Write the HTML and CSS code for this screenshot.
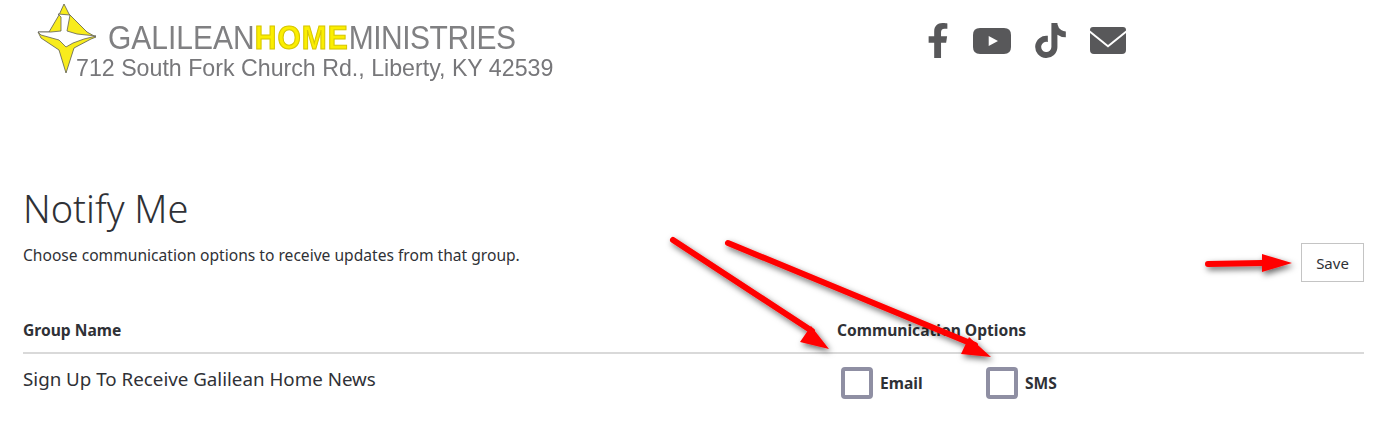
FILE: index.html
```html
<!DOCTYPE html>
<html lang="en">
<head>
<meta charset="utf-8">
<title>Notify Me</title>
<link rel="stylesheet" href="styles.css">
</head>
<body>
<header class="site-header">
  <a class="logo" href="#">
    <svg class="logo-mark" viewBox="0 0 60 72" aria-hidden="true">
      <path d="M27 1 L32 11 L50 29 L59 34 L54 36 L37 45 L29 70 L22 47 L4 35 L1 29 L12 29 L22 12 Z" fill="#f8ec1c" stroke="#5a5a50" stroke-width=".8" stroke-linejoin="round"/>
      <path d="M21 11 L33 12 L30 28 L40 31 L59 33 L47 36 L36 40 L29 44 L22 37 L4 32 L1 29 L14 29 L24 28 L24 14 Z" fill="#fff" stroke="#5f5f56" stroke-width=".8" stroke-linejoin="round"/>
    </svg>
    <div class="logo-name"><span>GALILEAN</span><b>HOME</b><span class="tight">MINISTRIES</span></div>
    <div class="logo-addr">712 South Fork Church Rd., Liberty, KY 42539</div>
  </a>
  <nav class="social">
    <a href="#" class="ico-f"><svg viewBox="0 0 320 512"><path d="M279.14 288l14.22-92.66h-88.91v-60.13c0-25.35 12.42-50.06 52.24-50.06h40.42V6.26S260.43 0 225.36 0c-73.22 0-121.08 44.38-121.08 124.72v70.62H22.89V288h81.39v224h100.17V288z"/></svg></a>
    <a href="#" class="ico-y"><svg viewBox="0 0 38 26"><path fill-rule="evenodd" d="M7 0H31Q38 0 38 7V19Q38 26 31 26H7Q0 26 0 19V7Q0 0 7 0ZM15.700 8V18L25 13Z"/></svg></a>
    <a href="#" class="ico-t"><svg viewBox="0 0 448 512"><path d="M448,209.91a210.06,210.06,0,0,1-122.77-39.25V349.38A162.55,162.55,0,1,1,185,188.31V278.2a74.62,74.62,0,1,0,52.23,71.18V0l88,0a121.18,121.18,0,0,0,1.86,22.17h0A122.18,122.18,0,0,0,381,102.39a121.43,121.43,0,0,0,67,20.14Z"/></svg></a>
    <a href="#" class="ico-m"><svg viewBox="0 0 36 27"><path d="M3 0H33Q36 0 36 3V3.500L18 18 0 3.500V3Q0 0 3 0Z"/><path d="M0 6L18 20.500 36 6V23Q36 27 32 27H4Q0 27 0 23Z"/></svg></a>
  </nav>
</header>
<main class="page">
  <h1 class="title">Notify Me</h1>
  <div class="intro">
    <p class="lead">Choose communication options to receive updates from that group.</p>
    <button class="save" type="button">Save</button>
  </div>
  <div class="table-head">
    <div>Group Name</div>
    <div>Communication Options</div>
  </div>
  <div class="table-row">
    <div class="group">Sign Up To Receive Galilean Home News</div>
    <div class="options">
      <label class="opt"><span class="box"></span>Email</label>
      <label class="opt"><span class="box"></span>SMS</label>
    </div>
  </div>
</main>
<svg class="arrows" viewBox="0 0 1400 431" aria-hidden="true">
  <defs>
    <filter id="sh" x="-20%" y="-20%" width="140%" height="140%"><feDropShadow dx="2" dy="3" stdDeviation="3" flood-color="#000" flood-opacity=".6"/></filter>
  </defs>
  <g filter="url(#sh)" fill="#f00" stroke="none">
    <path d="M673 240L812 331" stroke="#f00" stroke-width="6" stroke-linecap="round" fill="none"/>
    <path d="M829 349L800 342 811 326Z"/>
    <path d="M728 243L975 345" stroke="#f00" stroke-width="6" stroke-linecap="round" fill="none"/>
    <path d="M991 357L961 354 969 337Z"/>
    <path d="M1208 264L1262 263" stroke="#f00" stroke-width="6" stroke-linecap="round" fill="none"/>
    <path d="M1292 263L1262 254V272Z"/>
  </g>
</svg>
</body>
</html>
```
FILE: styles.css
```css
* { box-sizing: border-box; }
html, body { margin: 0; padding: 0; background: #fff; }
body { font-family: "Noto Sans", "Liberation Sans", sans-serif; color: #2f3136; width: 1400px; height: 431px; overflow: hidden; position: relative; }
.site-header { display: flex; height: 184px; align-items: flex-start; }
.logo { position: relative; display: block; width: 900px; padding: 21px 0 0 37px; color: #77777a; text-decoration: none; font-family: "Liberation Sans", sans-serif; filter: blur(.35px); }
.logo-mark { position: absolute; left: 37px; top: 3px; width: 60px; height: 72px; }
.logo-name { margin-left: 71px; font-size: 30px; line-height: 36px; height: 34px; white-space: nowrap; color: #808082; transform: scaleY(1.1); transform-origin: 0 28px; }
.logo-name b { color: #fbee00; -webkit-text-stroke: 1px #d6c600; letter-spacing: 1px; }
.tight { letter-spacing: -.5px; }
.logo-addr { margin-left: 39px; font-size: 23.2px; line-height: 26px; white-space: nowrap; }
.social { display: flex; align-items: center; gap: 24px; margin: 23px 0 0 27px; }
.social a { display: block; }
.social svg { display: block; fill: #58585a; }
.ico-f svg { width: 22px; height: 35px; }
.ico-y svg { width: 38px; height: 26px; }
.ico-t svg { width: 31px; height: 35px; }
.ico-m svg { width: 36px; height: 27px; }
.page { padding: 0 36px 0 23px; }
.title { margin: 0; font-size: 38px; line-height: 48px; font-weight: 300; color: #2f3136; }
.intro { display: flex; justify-content: space-between; align-items: flex-start; margin-top: 11px; height: 66px; }
.lead { margin: 0; font-size: 15.6px; line-height: 24px; }
.save { width: 63px; height: 39px; background: #fff; border: 1px solid #c4c4c4; font: 400 15px "Noto Sans", sans-serif; color: #2f3136; padding: 0; }
.table-head { display: grid; grid-template-columns: 814px 1fr; font-weight: 700; font-size: 15.6px; line-height: 24px; margin-top: 9px; padding-bottom: 10px; border-bottom: 2px solid #d9d9d9; }
.table-row { display: grid; grid-template-columns: 814px 1fr; padding-top: 12px; }
.group { font-size: 18.75px; line-height: 26px; }
.options { display: flex; gap: 28px; padding: 1px 0 0 4px; }
.opt { display: flex; align-items: center; gap: 7px; width: 117px; font-weight: 700; font-size: 15.6px; }
.box { width: 32px; height: 32px; border: 4px solid #8f8fa3; border-radius: 4px; background: #fff; flex: none; }
.arrows { position: absolute; left: 0; top: 0; width: 1400px; height: 431px; pointer-events: none; }
```
